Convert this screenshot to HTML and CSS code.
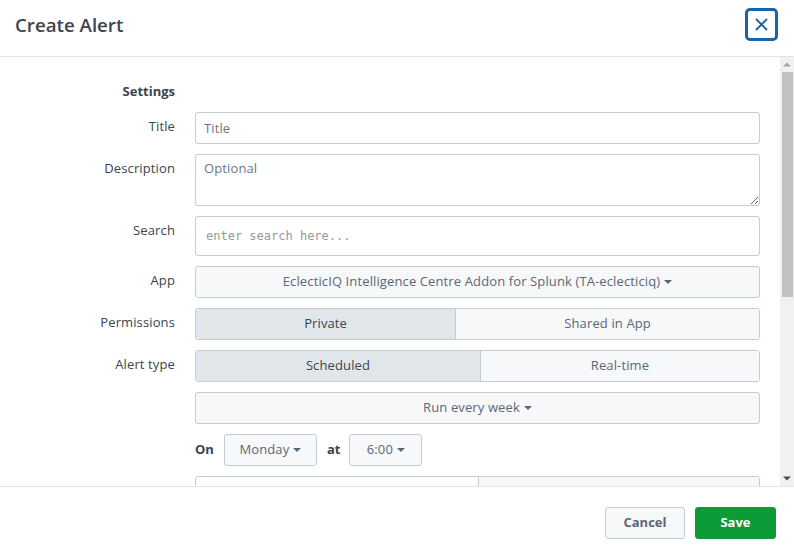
FILE: index.html
```html
<!DOCTYPE html>
<html>
<head>
<meta charset="utf-8">
<link rel="stylesheet" href="styles.css">
</head>
<body>
<div class="modal">
  <div class="header">
    <h1 class="title">Create Alert</h1>
    <button class="close" aria-label="Close">
      <svg width="13" height="13" viewBox="0 0 13 13"><path d="M1.5 1.5 L11.5 11.5 M11.5 1.5 L1.5 11.5" stroke="#1b5f9c" stroke-width="1.8" stroke-linecap="round" fill="none"/></svg>
    </button>
  </div>
  <div class="body">
    <div class="viewport">
      <div class="form">
        <div class="label section">Settings</div>
        <div></div>

        <div class="label">Title</div>
        <input class="input" type="text" placeholder="Title">

        <div class="label">Description</div>
        <textarea class="textarea" placeholder="Optional"></textarea>

        <div class="label">Search</div>
        <input class="input search" type="text" placeholder="enter search here...">

        <div class="label">App</div>
        <button class="btn full">EclecticIQ Intelligence Centre Addon for Splunk (TA-eclecticiq)<span class="caret"></span></button>

        <div class="label">Permissions</div>
        <div class="seg">
          <button class="seg-item active">Private</button>
          <button class="seg-item">Shared in App</button>
        </div>

        <div class="label">Alert type</div>
        <div class="seg">
          <button class="seg-item active">Scheduled</button>
          <button class="seg-item">Real-time</button>
        </div>

        <div></div>
        <button class="btn full">Run every week<span class="caret"></span></button>

        <div></div>
        <div class="inline">
          <span class="word">On</span>
          <button class="btn day">Monday<span class="caret"></span></button>
          <span class="word">at</span>
          <button class="btn time">6:00<span class="caret"></span></button>
        </div>

        <div></div>
        <div class="seg split">
          <input class="seg-input" type="text" value="">
          <button class="seg-item plain"></button>
        </div>
      </div>
    </div>
    <div class="scrollbar" aria-hidden="true">
      <div class="sb-btn">
        <svg width="14" height="15" viewBox="0 0 14 15"><path d="M3 9.5 L7 5.5 L11 9.5 Z" fill="#a3a3a3"/></svg>
      </div>
      <div class="sb-track">
        <div class="sb-thumb"></div>
      </div>
      <div class="sb-btn">
        <svg width="14" height="15" viewBox="0 0 14 15"><path d="M3 5.5 L7 9.5 L11 5.5 Z" fill="#505050"/></svg>
      </div>
    </div>
  </div>
  <div class="footer">
    <button class="fbtn cancel">Cancel</button>
    <button class="fbtn save">Save</button>
  </div>
</div>
</body>
</html>
```

FILE: styles.css
```css
* { box-sizing: border-box; }
html, body { margin: 0; padding: 0; background: #fff; overflow: hidden; }
body {
  font-family: "Open Sans", Lato, "Liberation Sans", sans-serif;
  font-size: 13px;
  letter-spacing: 0.12px;
  color: #3c444d;
}
.modal {
  width: 794px;
  height: 559px;
  display: flex;
  flex-direction: column;
  background: #fff;
}
.header {
  height: 57px;
  flex: none;
  border-bottom: 1px solid #e1e6eb;
  display: flex;
  align-items: center;
  justify-content: space-between;
  padding: 0 16px 1px 15px;
}
.title {
  margin: 0;
  font-size: 18.7px;
  font-weight: 600;
  letter-spacing: 0;
  color: #3c444d;
  margin-top: -6px;
}
.close {
  width: 33px;
  height: 33px;
  border: 3px solid #1765a8;
  border-radius: 5px;
  background: #fff;
  display: flex;
  align-items: center;
  justify-content: center;
  padding: 0;
  margin-top: -6px;
}
.body {
  flex: 1;
  min-height: 0;
  display: flex;
}
.viewport {
  flex: 1;
  overflow: hidden;
}
.scrollbar {
  width: 14px;
  flex: none;
  background: #f1f1f1;
  display: flex;
  flex-direction: column;
}
.sb-btn {
  height: 15px;
  flex: none;
  display: flex;
}
.sb-track {
  flex: 1;
  padding: 0 1px 0 2px;
}
.sb-thumb {
  height: 225px;
  background: #c1c1c1;
}
.form {
  display: grid;
  grid-template-columns: 175px 565px;
  column-gap: 20px;
  row-gap: 10px;
  padding: 25px 0 40px 0;
}
.label {
  text-align: right;
  line-height: 20px;
  padding-top: 4px;
  color: #3c444d;
}
.label.section {
  font-weight: 700;
  padding-top: 0;
  line-height: 18px;
  padding-bottom: 2px;
  letter-spacing: 0;
}
.input, .textarea {
  font-family: inherit;
  font-size: 13px;
  letter-spacing: 0.12px;
  color: #3c444d;
  border: 1px solid #c3cbd4;
  border-radius: 3px;
  background: #fff;
  height: 32px;
  padding: 0 8px 1px;
  width: 100%;
  outline: none;
}
.input::placeholder, .textarea::placeholder { color: #6b7785; }
.textarea {
  height: 52px;
  padding: 4px 8px;
  resize: vertical;
  display: block;
}
.input.search {
  height: 40px;
  font-family: "DejaVu Sans Mono", "Liberation Mono", monospace;
  font-size: 12px;
  letter-spacing: 0;
  padding: 0 10px 1px;
}
.input.search::placeholder { color: #999; }
.btn {
  font-family: inherit;
  font-size: 13px;
  letter-spacing: 0.12px;
  color: #5c6773;
  background: #f7f8fa;
  border: 1px solid #c3cbd4;
  border-radius: 3px;
  height: 32px;
  padding: 0 12px 2px;
  display: inline-flex;
  align-items: center;
  justify-content: center;
}
.btn.full { width: 100%; }
.caret {
  display: inline-block;
  width: 0; height: 0;
  border-left: 4px solid transparent;
  border-right: 4px solid transparent;
  border-top: 4px solid #5c6773;
  margin-left: 4px;
  margin-top: 2px;
}
.seg {
  display: flex;
  height: 32px;
  border: 1px solid #c3cbd4;
  border-radius: 3px;
  overflow: hidden;
}
.seg-item {
  flex: 1 1 auto;
  font-family: inherit;
  font-size: 13px;
  letter-spacing: 0.12px;
  color: #5c6773;
  background: #f7f8fa;
  border: 0;
  border-left: 1px solid #c3cbd4;
  padding: 0 12px 2px;
  display: flex;
  align-items: center;
  justify-content: center;
}
.seg-item:first-child { border-left: 0; }
.seg-item.active { background: #e1e6eb; color: #3c444d; }
.seg.split > * { flex: 0 0 50%; }
.seg-input {
  font-family: inherit;
  font-size: 13px;
  color: #3c444d;
  border: 0;
  padding: 0 8px;
  background: #fff;
  min-width: 0;
  outline: none;
}
.inline {
  display: flex;
  align-items: center;
  gap: 10px;
  height: 32px;
}
.word { font-weight: 700; color: #3c444d; letter-spacing: 0; margin-top: -2px; }
.btn.day { width: 93px; }
.btn.time { width: 73px; margin-left: -1px; }
.footer {
  height: 73px;
  flex: none;
  border-top: 1px solid #e1e6eb;
  display: flex;
  align-items: center;
  justify-content: flex-end;
  gap: 10px;
  padding: 0 18px 0 0;
}
.fbtn {
  font-family: inherit;
  font-size: 13px;
  font-weight: 700;
  height: 32px;
  border-radius: 3px;
  padding: 0 0 2px;
}
.cancel {
  width: 80px;
  background: #f7f8fa;
  border: 1px solid #c3cbd4;
  color: #5c6773;
}
.save {
  width: 81px;
  background: #0c9b36;
  border: 1px solid #0c9b36;
  color: #fff;
}
```
